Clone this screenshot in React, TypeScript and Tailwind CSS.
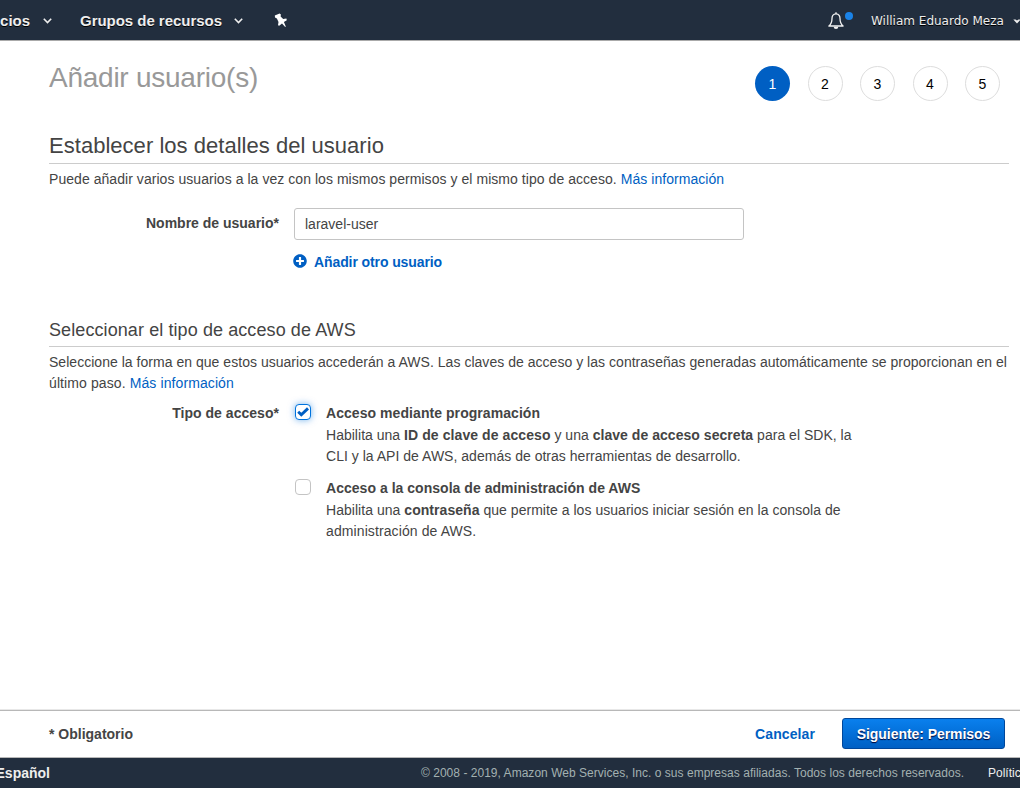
import React from 'react';
import { FaPlusCircle } from 'react-icons/fa';

function Caret({ className }: { className?: string }) {
  return (
    <svg className={className} width="9" height="6" viewBox="0 0 9 6" fill="none" stroke="#eee" strokeWidth="1.6">
      <path d="M0.8 0.8 L4.5 4.5 L8.2 0.8" />
    </svg>
  );
}

function SmallCaret({ className }: { className?: string }) {
  return (
    <svg className={className} width="8" height="5" viewBox="0 0 8 5" fill="#eee">
      <path d="M0.3 0.5 H2.6 L4 1.6 L5.4 0.5 H7.7 L4 4.6 Z" />
    </svg>
  );
}

function Pin() {
  return (
    <svg className="ml-[31px]" width="14" height="15" viewBox="0 0 14 15" fill="#fff">
      <path d="M5.6 0.4 L6.9 1.6 L6.6 3.6 L9.2 6 L12.4 5.6 L12.8 7.2 L9.9 9 L11.8 13.4 L11.2 13.9 L8 10.5 L5.2 12.8 L4 12.3 L4.5 9 L2.9 5.4 L1 4.6 L0.8 2.6 Z" />
    </svg>
  );
}

function Bell() {
  return (
    <svg className="mt-px" width="16" height="18" viewBox="0 0 16 18" fill="none" stroke="#f2f2f2" strokeWidth="1.3">
      <path d="M8 1.8 C5 1.8 4 4.2 4 6.5 C4 10.5 3 12.3 0.9 14 H15.1 C13 12.3 12 10.5 12 6.5 C12 4.2 11 1.8 8 1.8 Z" strokeLinejoin="round" />
      <path d="M8 0.2 V2" />
      <path d="M5.7 14.8 A2.3 2.2 0 0 0 10.3 14.8 Z" fill="#f2f2f2" stroke="none" />
    </svg>
  );
}

function Step({ n, active }: { n: number; active?: boolean }) {
  return (
    <div
      className={
        active
          ? 'flex size-[35px] items-center justify-center rounded-full bg-[#005fc3] pt-px text-sm text-white'
          : 'flex size-[35px] items-center justify-center rounded-full border border-[#ddd] pt-px text-sm text-black'
      }
    >
      {n}
    </div>
  );
}

function Check({ checked }: { checked?: boolean }) {
  return (
    <span
      role="checkbox"
      aria-checked={!!checked}
      className={
        checked
          ? 'flex size-4 shrink-0 items-center justify-center rounded-[4px] border border-[#0073dd] bg-white shadow-[0_0_7px_rgba(0,115,221,0.55)]'
          : 'size-4 shrink-0 rounded-[4px] border border-[#c4c4c4] bg-white'
      }
    >
      {checked && (
        <svg width="12" height="10" viewBox="0 0 12 10" fill="none" stroke="#005fc3" strokeWidth="2.9">
          <path d="M1.2 4.8 L4.3 7.8 L11 1.4" />
        </svg>
      )}
    </span>
  );
}

export default function App() {
  return (
    <div className="flex h-[788px] w-[1020px] flex-col overflow-hidden bg-white font-['Liberation_Sans',sans-serif] text-sm text-[#444]">
      <header className="flex h-[41px] shrink-0 items-center border-b border-[#aaa] bg-[#222e3e] text-[#eee]">
        <div className="mt-[2px] flex w-[30px] justify-end whitespace-nowrap text-[15px] font-bold tracking-[-0.03px] [text-shadow:0_1px_0_#000]">Servicios</div>
        <Caret className="ml-[13px] mt-[2px]" />
        <div className="ml-[28px] mt-[2px] w-[142px] whitespace-nowrap text-[15px] font-bold tracking-[-0.03px] [text-shadow:0_1px_0_#000]">Grupos de recursos</div>
        <Caret className="ml-[12px] mt-[2px]" />
        <Pin />
        <div className="ml-auto flex shrink-0 items-center">
          <Bell />
          <span className="mb-2 ml-px size-2 rounded-full bg-[#1a83e8]" />
          <span className="ml-[18px] mt-[2px] w-[133px] whitespace-nowrap font-['DejaVu_Sans',sans-serif] text-xs [text-shadow:0_1px_0_#000]">William Eduardo Meza</span>
          <SmallCaret className="-mr-px ml-[9px] mt-[2px] shrink-0" />
        </div>
      </header>

      <main className="flex grow flex-col pl-[49px] pr-[11px]">
        <div className="flex h-[79px] items-start justify-between pr-[9px]">
          <h1 className="mt-5 whitespace-nowrap text-[28px] leading-[34px] tracking-[-0.25px] text-[#999]">Añadir usuario(s)</h1>
          <div className="mt-[25px] flex gap-[17.5px]">
            <Step n={1} active />
            <Step n={2} />
            <Step n={3} />
            <Step n={4} />
            <Step n={5} />
          </div>
        </div>

        <h2 className="h-11 whitespace-nowrap border-b border-[#ccc] pt-[13px] text-[22px] leading-[26px] tracking-[0.03px]">Establecer los detalles del usuario</h2>
        <p className="mt-[5px] whitespace-nowrap leading-[21px] tracking-[0.05px]">
          Puede añadir varios usuarios a la vez con los mismos permisos y el mismo tipo de acceso. <a className="text-[#005fc3]">Más información</a>
        </p>

        <div className="mt-[18px] flex items-start">
          <label className="mt-[5px] w-[230px] text-right font-bold leading-[21px]">Nombre de usuario*</label>
          <div className="ml-[15px] flex h-8 w-[450px] items-center rounded-[3px] border border-[#c4c4c4] px-[10px]">laravel-user</div>
        </div>
        <a className="ml-[244px] mt-3 flex items-center font-bold leading-[21px] text-[#005fc3]">
          <FaPlusCircle className="mb-[3px] size-[14px]" />
          <span className="ml-[7px] tracking-[-0.1px]">Añadir otro usuario</span>
        </a>

        <h3 className="mt-[44px] h-[30px] whitespace-nowrap border-b border-[#ccc] text-[18px] leading-[26px] tracking-[0.09px]">Seleccionar el tipo de acceso de AWS</h3>
        <p className="mt-[5px] whitespace-nowrap leading-[21px]">
          <span className="tracking-[0.03px]">Seleccione la forma en que estos usuarios accederán a AWS. Las claves de acceso y las contraseñas generadas automáticamente se proporcionan en el</span>
          <br />
          <span className="tracking-[0.1px]">último paso. <a className="text-[#005fc3]">Más información</a></span>
        </p>

        <div className="mt-[9px] flex items-start leading-[21px]">
          <div className="w-[230px] text-right font-bold tracking-[0.03px]">Tipo de acceso*</div>
          <div className="ml-4 flex flex-col gap-[11px] whitespace-nowrap">
            <div className="flex items-start">
              <div className="mt-px flex"><Check checked /></div>
              <div className="ml-[15px]">
                <div className="mb-px font-bold tracking-[0.06px]">Acceso mediante programación</div>
                <div className="tracking-[0.02px]">Habilita una <b className="tracking-[0.08px]">ID de clave de acceso</b> y una <b className="tracking-[0.04px]">clave de acceso secreta</b> para el SDK, la</div>
                <div className="tracking-[0.02px]">CLI y la API de AWS, además de otras herramientas de desarrollo.</div>
              </div>
            </div>
            <div className="flex items-start">
              <div className="mt-px flex"><Check /></div>
              <div className="ml-[15px]">
                <div className="mb-px font-bold tracking-[0.03px]">Acceso a la consola de administración de AWS</div>
                <div className="tracking-[0.04px]">Habilita una <b>contraseña</b> que permite a los usuarios iniciar sesión en la consola de</div>
                <div className="tracking-[0.1px]">administración de AWS.</div>
              </div>
            </div>
          </div>
        </div>
      </main>

      <div className="flex h-12 shrink-0 items-center border-b border-t border-[#b8b8b8] pl-[49px] pr-[15px] font-bold shadow-[0_-1px_0_#e8e8e8]">
        <span>* Obligatorio</span>
        <a className="ml-auto tracking-[0.1px] text-[#005fc3]">Cancelar</a>
        <button className="mb-px ml-[27px] h-[31px] w-[163px] whitespace-nowrap rounded-[3px] border border-[#00479b] bg-gradient-to-b from-[#0a80ee] to-[#0060c4] font-bold tracking-[-0.05px] text-white [text-shadow:0_1px_1px_#003]">Siguiente: Permisos</button>
      </div>

      <footer className="flex h-[30px] shrink-0 items-center whitespace-nowrap bg-[#222e3e]">
        <div className="flex w-[50px] justify-end font-bold text-[#eee]">Español</div>
        <div className="ml-[371px] w-[543px] text-xs tracking-[0.025px] text-[#a3b1b1]">© 2008 - 2019, Amazon Web Services, Inc. o sus empresas afiliadas. Todos los derechos reservados.</div>
        <div className="ml-6 text-xs text-[#eee]">Política de privacidad</div>
      </footer>
    </div>
  );
}
